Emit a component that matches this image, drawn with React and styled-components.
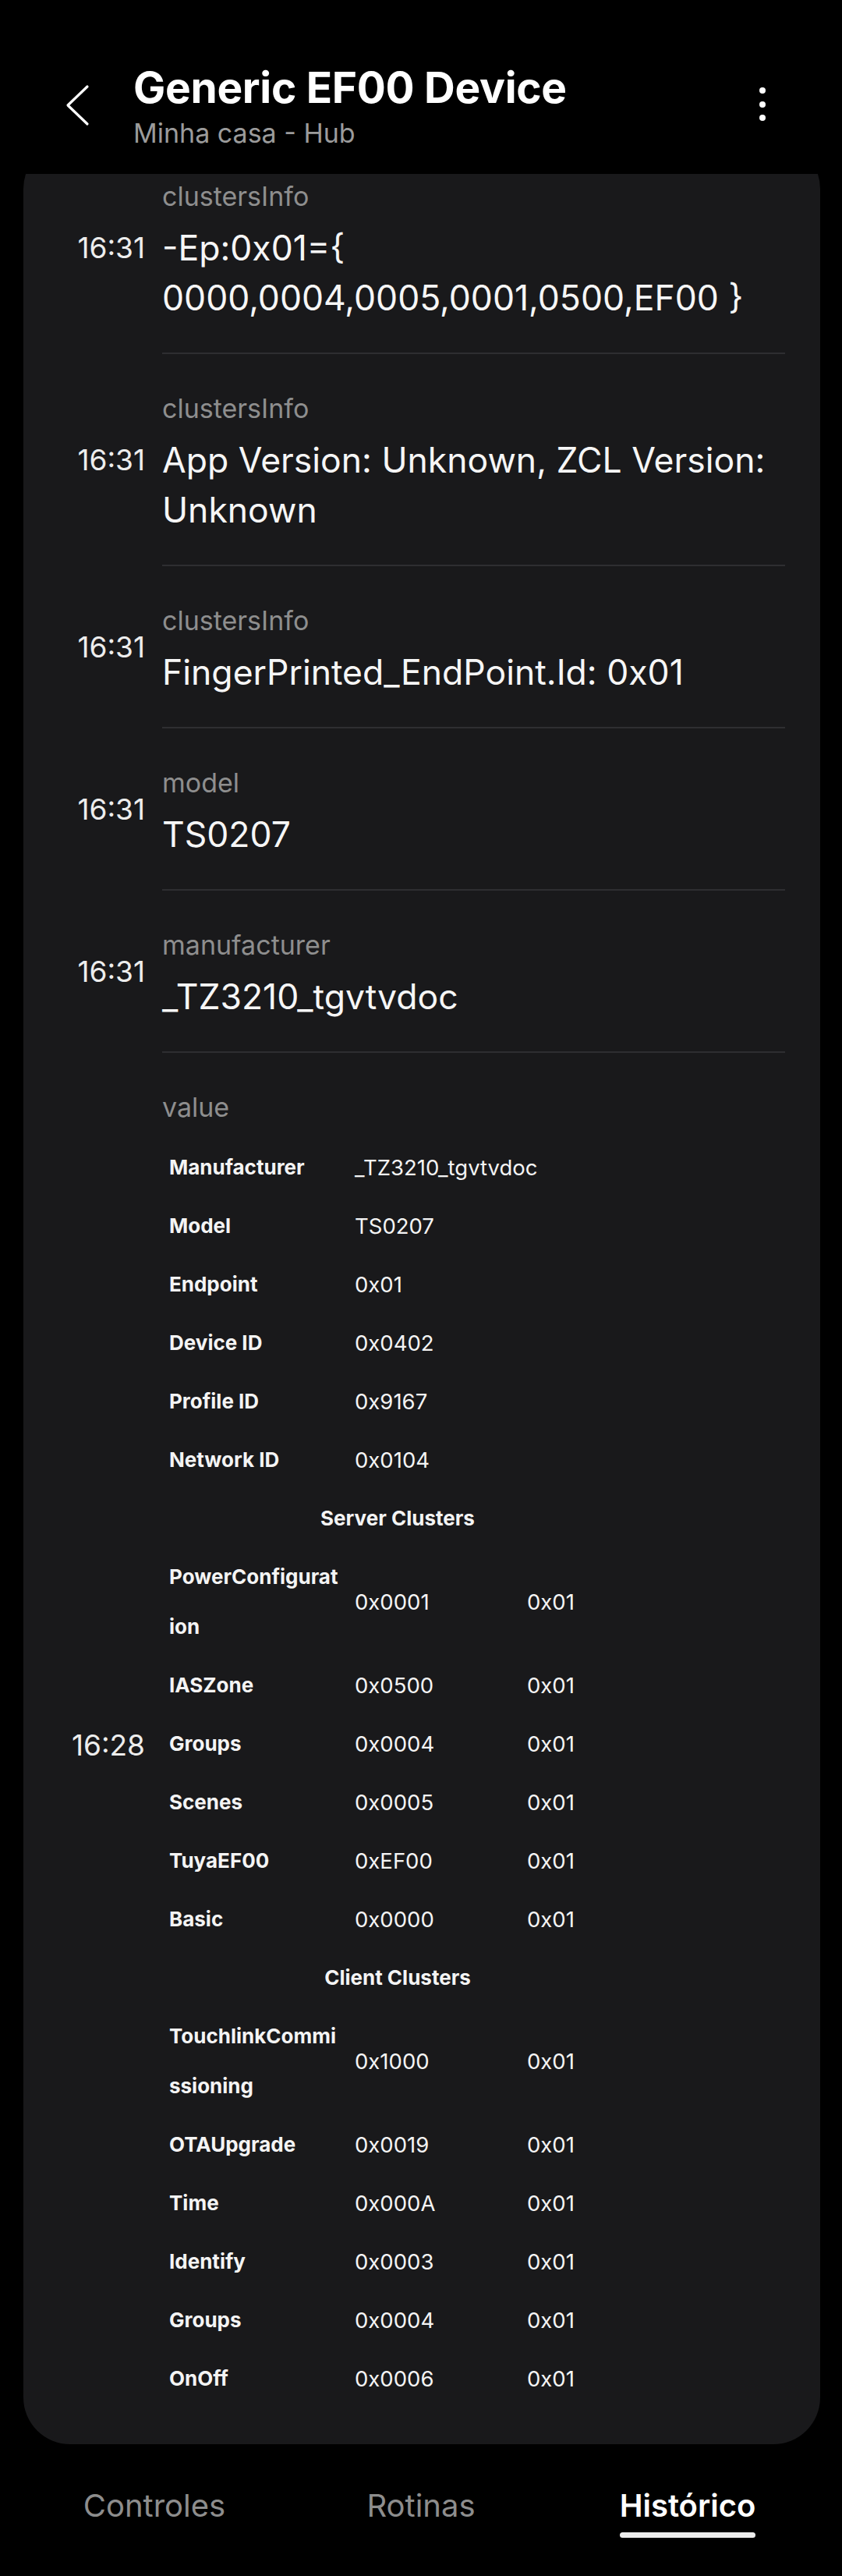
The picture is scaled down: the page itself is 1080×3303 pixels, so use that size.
import React from "react";
import styled, { createGlobalStyle } from "styled-components";

const GlobalStyle = createGlobalStyle`
  html, body {
    margin: 0;
    padding: 0;
    background: #000;
  }
  body {
    font-family: Inter, "Noto Sans", sans-serif;
    -webkit-font-smoothing: antialiased;
  }
  * {
    box-sizing: border-box;
  }
`;

const Screen = styled.div`
  width: 1080px;
  height: 3303px;
  display: flex;
  flex-direction: column;
  background: #000;
  color: #fff;
`;

const Header = styled.header`
  display: flex;
  align-items: center;
  padding: 79px 82px 32px 80px;
`;

const IconButton = styled.button`
  background: none;
  border: none;
  padding: 0;
  width: 40px;
  height: 60px;
  color: #fff;
  cursor: pointer;
`;

const TitleBlock = styled.div`
  flex: 1;
  margin-left: 51px;
  display: flex;
  flex-direction: column;
  gap: 6px;
`;

const Title = styled.h1`
  margin: 0;
  font-size: 55px;
  line-height: 66px;
  font-weight: 700;
  letter-spacing: -0.3px;
  color: #fff;
`;

const Subtitle = styled.div`
  font-size: 34px;
  line-height: 40px;
  color: #9b9b9b;
`;

const Viewport = styled.main`
  flex: 1;
  overflow: hidden;
  padding: 0 28px 0 30px;
`;

// list is scrolled: first entry is partly under the header
const Card = styled.section`
  margin-top: -41px;
  background: #19191b;
  border-radius: 60px;
  padding-bottom: 9px;
`;

const Entry = styled.div`
  display: flex;
  align-items: center;
`;

const Time = styled.div`
  flex: 0 0 178px;
  padding-right: 22px;
  text-align: right;
  font-size: 37px;
  line-height: 44px;
  color: #ededed;
`;

const Body = styled.div`
  flex: 1;
  min-width: 0;
  margin-right: 45px;
  padding: 49px 0 38px;
  display: flex;
  flex-direction: column;
  gap: 13px;
  border-bottom: ${({ $last }) => ($last ? "none" : "2px solid #2e2e31")};
`;

const Label = styled.div`
  font-size: 34px;
  line-height: 42px;
  color: #8e8e8e;
`;

const Value = styled.div`
  font-size: 44.5px;
  line-height: 64px;
  color: #f6f6f6;
`;

const InfoTable = styled.table`
  margin-top: 5px;
  width: 604px;
  table-layout: fixed;
  border-collapse: collapse;
`;

const Cell = styled.td`
  padding: 5.5px 9px;
  font-size: ${({ $bold }) => ($bold ? "26px" : "27.5px")};
  line-height: 64px;
  vertical-align: middle;
  color: #f4f4f4;
  font-weight: ${({ $bold }) => ($bold ? 700 : 400)};
  text-align: ${({ $center }) => ($center ? "center" : "left")};
`;

const TabBar = styled.nav`
  flex: 0 0 168px;
  display: grid;
  grid-template-columns: repeat(3, 1fr);
  padding: 54px 27px 0;
`;

const Tab = styled.div`
  display: flex;
  justify-content: center;
`;

const TabInner = styled.div`
  display: flex;
  flex-direction: column;
`;

const TabText = styled.span`
  font-size: 40px;
  line-height: 48px;
  font-weight: ${({ $active }) => ($active ? 600 : 400)};
  color: ${({ $active }) => ($active ? "#fff" : "#8d8d8d")};
`;

const TabLine = styled.div`
  margin-top: 10px;
  height: 7px;
  border-radius: 4px;
  background: #ececec;
`;

const entries = [
  { time: "16:31", label: "clustersInfo", value: "-Ep:0x01={ 0000,0004,0005,0001,0500,EF00 }" },
  { time: "16:31", label: "clustersInfo", value: "App Version: Unknown, ZCL Version: Unknown" },
  { time: "16:31", label: "clustersInfo", value: "FingerPrinted_EndPoint.Id: 0x01" },
  { time: "16:31", label: "model", value: "TS0207" },
  { time: "16:31", label: "manufacturer", value: "_TZ3210_tgvtvdoc" },
];

const deviceInfo = [
  ["Manufacturer", "_TZ3210_tgvtvdoc"],
  ["Model", "TS0207"],
  ["Endpoint", "0x01"],
  ["Device ID", "0x0402"],
  ["Profile ID", "0x9167"],
  ["Network ID", "0x0104"],
];

const serverClusters = [
  ["PowerConfigurat\u200Bion", "0x0001", "0x01"],
  ["IASZone", "0x0500", "0x01"],
  ["Groups", "0x0004", "0x01"],
  ["Scenes", "0x0005", "0x01"],
  ["TuyaEF00", "0xEF00", "0x01"],
  ["Basic", "0x0000", "0x01"],
];

const clientClusters = [
  ["TouchlinkCommi\u200Bssioning", "0x1000", "0x01"],
  ["OTAUpgrade", "0x0019", "0x01"],
  ["Time", "0x000A", "0x01"],
  ["Identify", "0x0003", "0x01"],
  ["Groups", "0x0004", "0x01"],
  ["OnOff", "0x0006", "0x01"],
];

const BackIcon = () => (
  <svg width="40" height="60" viewBox="0 0 40 60" fill="none">
    <polyline
      points="32,6 7,30 32,54"
      stroke="currentColor"
      strokeWidth="3.2"
      strokeLinecap="round"
      strokeLinejoin="round"
    />
  </svg>
);

const MoreIcon = () => (
  <svg width="40" height="60" viewBox="0 0 40 60" fill="currentColor">
    <circle cx="20" cy="11" r="4" />
    <circle cx="20" cy="29" r="4" />
    <circle cx="20" cy="46" r="4" />
  </svg>
);

const ClusterRows = ({ title, rows }) => (
  <>
    <tr>
      <Cell colSpan={3} $bold $center>
        {title}
      </Cell>
    </tr>
    {rows.map(([name, id, ep], i) => (
      <tr key={title + i}>
        <Cell $bold>{name}</Cell>
        <Cell>{id}</Cell>
        <Cell>{ep}</Cell>
      </tr>
    ))}
  </>
);

export default function App() {
  return (
    <>
      <GlobalStyle />
      <Screen>
        <Header>
          <IconButton aria-label="Voltar">
            <BackIcon />
          </IconButton>
          <TitleBlock>
            <Title>Generic EF00 Device</Title>
            <Subtitle>Minha casa - Hub</Subtitle>
          </TitleBlock>
          <IconButton aria-label="Mais opções">
            <MoreIcon />
          </IconButton>
        </Header>

        <Viewport>
          <Card>
            {entries.map((e, i) => (
              <Entry key={i}>
                <Time>{e.time}</Time>
                <Body>
                  <Label>{e.label}</Label>
                  <Value>{e.value}</Value>
                </Body>
              </Entry>
            ))}

            <Entry>
              <Time>16:28</Time>
              <Body $last>
                <Label>value</Label>
                <InfoTable>
                  <colgroup>
                    <col style={{ width: 238 }} />
                    <col style={{ width: 221 }} />
                    <col style={{ width: 145 }} />
                  </colgroup>
                  <tbody>
                    {deviceInfo.map(([k, v]) => (
                      <tr key={k}>
                        <Cell $bold>{k}</Cell>
                        <Cell colSpan={2}>{v}</Cell>
                      </tr>
                    ))}
                    <ClusterRows title="Server Clusters" rows={serverClusters} />
                    <ClusterRows title="Client Clusters" rows={clientClusters} />
                  </tbody>
                </InfoTable>
              </Body>
            </Entry>
          </Card>
        </Viewport>

        <TabBar>
          {["Controles", "Rotinas", "Histórico"].map((t) => {
            const active = t === "Histórico";
            return (
              <Tab key={t}>
                <TabInner>
                  <TabText $active={active}>{t}</TabText>
                  {active && <TabLine />}
                </TabInner>
              </Tab>
            );
          })}
        </TabBar>
      </Screen>
    </>
  );
}
